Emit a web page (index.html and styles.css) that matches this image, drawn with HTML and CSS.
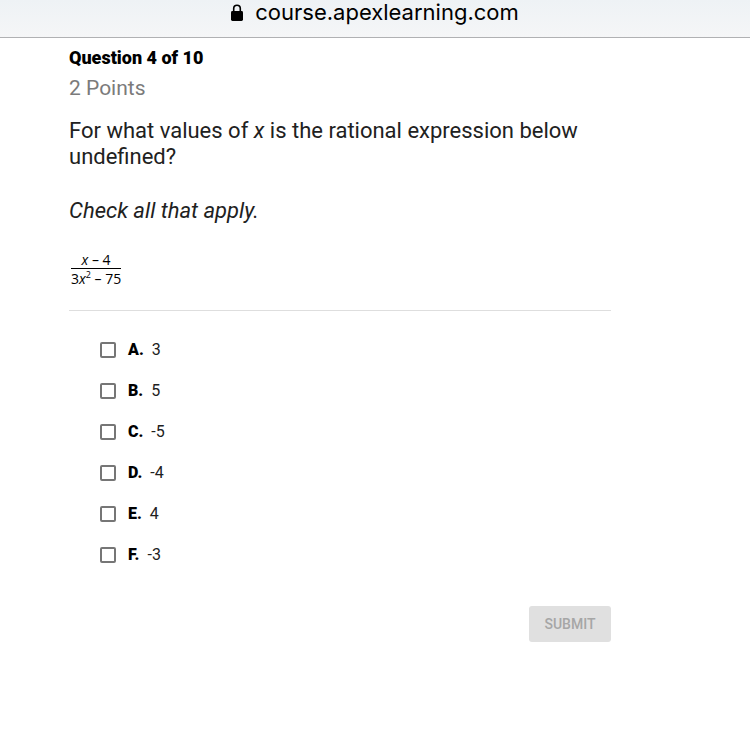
FILE: index.html
```html
<!DOCTYPE html>
<html lang="en">
<head>
    <meta charset="UTF-8">
    <meta name="viewport" content="width=device-width, initial-scale=1.0">
    <title>Question 4 of 10</title>
    <link rel="stylesheet" href="styles.css">
</head>
<body>
    <header class="address-bar">
        <svg class="lock" viewBox="0 0 12 17" aria-hidden="true">
            <path d="M2.7 8V4.6a3.3 3.3 0 0 1 6.6 0V8" fill="none" stroke="#000" stroke-width="1.6"/>
            <rect x="0" y="7" width="12" height="10" rx="1.4"/>
        </svg>
        <span>course.apexlearning.com</span>
    </header>

    <main class="question">
        <h1>Question 4 of 10</h1>
        <p class="points">2 Points</p>
        <p class="prompt">For what values of <i>x</i> is the rational expression below undefined?</p>
        <p class="hint">Check all that apply.</p>

        <div class="fraction">
            <span class="numerator"><i>x</i> – 4</span>
            <span class="denominator">3<i>x</i><sup>2</sup> – 75</span>
        </div>

        <form class="answers">
            <ul>
                <li><label><input type="checkbox" name="answer" value="A"><b>A.</b> <span>3</span></label></li>
                <li><label><input type="checkbox" name="answer" value="B"><b>B.</b> <span>5</span></label></li>
                <li><label><input type="checkbox" name="answer" value="C"><b>C.</b> <span>-5</span></label></li>
                <li><label><input type="checkbox" name="answer" value="D"><b>D.</b> <span>-4</span></label></li>
                <li><label><input type="checkbox" name="answer" value="E"><b>E.</b> <span>4</span></label></li>
                <li><label><input type="checkbox" name="answer" value="F"><b>F.</b> <span>-3</span></label></li>
            </ul>
            <button type="submit" disabled>SUBMIT</button>
        </form>
    </main>
</body>
</html>
```

FILE: styles.css
```css
* {
    box-sizing: border-box;
}
body {
    margin: 0;
    background-color: #fff;
    color: #212121;
    font-family: Roboto, Arial, sans-serif;
}
.address-bar {
    display: flex;
    justify-content: center;
    align-items: center;
    gap: 12px;
    height: 38px;
    padding-bottom: 13px;
    border-bottom: 1px solid #b0b1b3;
    background: linear-gradient(#eef2f5, #f5f6f7);
    color: #000;
    font-family: Inter, "Liberation Sans", sans-serif;
    font-size: 22px;
    line-height: 24px;
}
.lock {
    width: 12px;
    height: 17px;
}
.question {
    max-width: 680px;
    padding: 8px 69px 40px 69px;
}
h1 {
    margin: 0;
    color: #000;
    font-size: 18px;
    font-weight: 900;
    line-height: 24px;
}
p {
    margin: 0;
    font-size: 22px;
    line-height: 26px;
}
.points {
    margin-top: 5px;
    color: #7b7b7b;
    font-size: 21px;
}
.prompt {
    margin-top: 17px;
}
.hint {
    margin-top: 28px;
    font-style: italic;
}
.fraction {
    display: flex;
    flex-direction: column;
    width: fit-content;
    margin: 28px 0 0 2px;
    color: #000;
    font-family: "Open Sans", sans-serif;
    font-size: 14px;
    line-height: 16px;
    text-align: center;
}
.denominator {
    padding-top: 2px;
    border-top: 1px solid #000;
}
sup {
    font-size: 9px;
    line-height: 0;
}
.answers {
    margin-top: 23px;
    border-top: 1px solid #dedede;
}
ul {
    margin: 0;
    padding: 18px 0 0 31px;
    list-style: none;
}
li {
    display: flex;
    align-items: center;
    height: 41px;
    font-size: 16px;
}
label {
    display: flex;
    align-items: center;
}
input {
    appearance: none;
    width: 16px;
    height: 16px;
    margin: 0 12px 0 0;
    border: 2px solid #767676;
    border-radius: 2px;
    background-color: #fff;
}
input:checked {
    background-color: #767676;
}
b {
    margin-right: 8px;
    color: #000;
    font-weight: 900;
}
button {
    display: block;
    width: 82px;
    height: 36px;
    margin: 31px 0 0 auto;
    border: none;
    border-radius: 3px;
    background-color: #e0e0e0;
    color: #a6a6a6;
    font-family: inherit;
    font-size: 14px;
    font-weight: 500;
}
```
